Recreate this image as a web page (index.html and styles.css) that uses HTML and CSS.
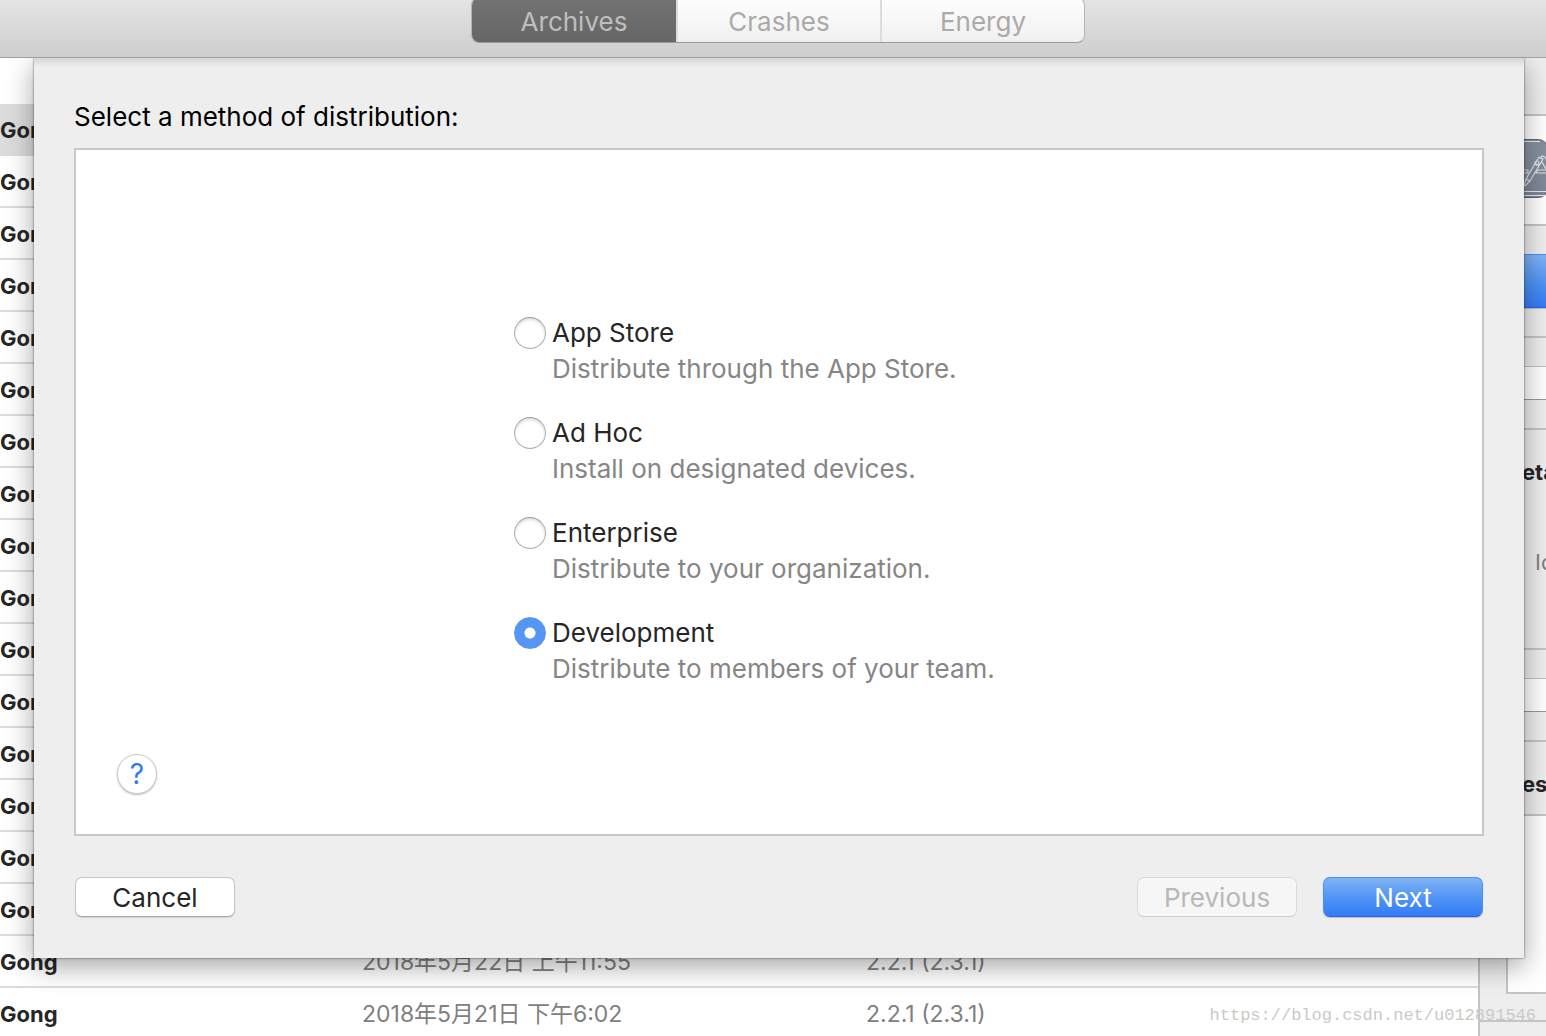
FILE: index.html
```html
<!DOCTYPE html>
<html lang="en">
<head>
<meta charset="utf-8">
<title>Organizer</title>
<link rel="stylesheet" href="styles.css">
</head>
<body>
<div class="window">
  <header class="toolbar">
    <div class="segments">
      <button class="segment segment-on" type="button" disabled>Archives</button>
      <button class="segment" type="button" disabled>Crashes</button>
      <button class="segment" type="button" disabled>Energy</button>
    </div>
  </header>
  <div class="content">
    <main class="list">
      <table class="archives">
        <thead><tr><th class="col-name"></th><th class="col-date"></th><th></th></tr></thead>
        <tbody>
          <tr class="selected"><td>Gong</td><td></td><td></td></tr>
          <tr><td>Gong</td><td></td><td></td></tr>
          <tr><td>Gong</td><td></td><td></td></tr>
          <tr><td>Gong</td><td></td><td></td></tr>
          <tr><td>Gong</td><td></td><td></td></tr>
          <tr><td>Gong</td><td></td><td></td></tr>
          <tr><td>Gong</td><td></td><td></td></tr>
          <tr><td>Gong</td><td></td><td></td></tr>
          <tr><td>Gong</td><td></td><td></td></tr>
          <tr><td>Gong</td><td></td><td></td></tr>
          <tr><td>Gong</td><td></td><td></td></tr>
          <tr><td>Gong</td><td></td><td></td></tr>
          <tr><td>Gong</td><td></td><td></td></tr>
          <tr><td>Gong</td><td></td><td></td></tr>
          <tr><td>Gong</td><td></td><td></td></tr>
          <tr><td>Gong</td><td></td><td></td></tr>
          <tr><td>Gong</td><td>2018年5月22日 上午11:55</td><td>2.2.1 (2.3.1)</td></tr>
          <tr><td>Gong</td><td>2018年5月21日 下午6:02</td><td>2.2.1 (2.3.1)</td></tr>
        </tbody>
      </table>
    </main>
    <aside class="inspector">
      <div class="inspector-head"></div>
      <div class="app">
        <svg class="app-icon" viewBox="0 0 60 60" aria-hidden="true">
          <defs><linearGradient id="g" x1="0" y1="0" x2="0" y2="1"><stop offset="0" stop-color="#87919e"/><stop offset="1" stop-color="#7c8796"/></linearGradient></defs>
          <rect x="0.5" y="0.5" width="59" height="58" rx="9" fill="url(#g)" stroke="#5d6876"/>
          <path d="M2 2.500H52M0 52.500H60M0 56.500H60" stroke="#e8ebee" fill="none"/>
          <g fill="none" stroke="#dfe3e8" stroke-width="1.200">
            <path d="M36 46l2-6 13-22 4 2-13 22-5 5zM47 24l4 3M38 40l4 2"/>
            <circle cx="49" cy="24" r="2"/>
            <path d="M52 20l2-3 3 1 7 14M54 23l6 11M50 31h9l1 3H48zM28 31h12v3H28z"/>
          </g>
        </svg>
      </div>
      <div class="group"><button class="primary upload" type="button" aria-label="Upload"></button></div>
      <div class="group"><input class="field" type="text" aria-label="Name"></div>
      <div class="group details"><h2>Details</h2><p>Identifier</p></div>
      <div class="group"><input class="field" type="text" aria-label="Symbols"></div>
      <div class="group description"><h2><label for="desc">Description</label></h2><textarea id="desc"></textarea></div>
    </aside>
    <form class="sheet">
      <h1>Select a method of distribution:</h1>
      <div class="panel">
        <div class="options">
          <div class="option"><input type="radio" name="m" id="m1"><label for="m1">App Store</label><p>Distribute through the App Store.</p></div>
          <div class="option"><input type="radio" name="m" id="m2"><label for="m2">Ad Hoc</label><p>Install on designated devices.</p></div>
          <div class="option"><input type="radio" name="m" id="m3"><label for="m3">Enterprise</label><p>Distribute to your organization.</p></div>
          <div class="option"><input type="radio" name="m" id="m4" checked><label for="m4">Development</label><p>Distribute to members of your team.</p></div>
        </div>
        <button class="help" type="button">?</button>
      </div>
      <div class="actions">
        <button class="plain" type="button">Cancel</button>
        <button class="plain previous" type="button" disabled>Previous</button>
        <button class="primary" type="button">Next</button>
      </div>
    </form>
  </div>
  <div class="watermark">https://blog.csdn.net/u012891546</div>
</div>
</body>
</html>
```
FILE: styles.css
```css
* { box-sizing: border-box; }

body {
  margin: 0;
  font-family: Inter, "Noto Sans CJK SC", sans-serif;
  font-size: 26px;
  color: #262626;
}

button { font: inherit; padding: 0; }
h1, h2, p { margin: 0; font-weight: 400; }

.window {
  position: relative;
  display: flex;
  flex-direction: column;
  height: 100vh;
  overflow: hidden;
}

.toolbar {
  flex: none;
  display: flex;
  justify-content: center;
  align-items: flex-end;
  height: 58px;
  padding: 0 0 14px 10px;
  background: linear-gradient(#e4e4e4, #cecece);
  border-bottom: 1px solid #a0a0a0;
}

.segments {
  display: flex;
  flex: none;
  height: 46px;
  border: 1px solid #b4b4b4;
  border-bottom-color: #9c9c9c;
  border-radius: 8px;
  overflow: hidden;
  background: linear-gradient(#fefefe, #f0f0f0);
}

.segment {
  width: 204px;
  border: 0;
  border-left: 2px solid #dcdcdc;
  padding-top: 2px;
  background: none;
  color: #aaa;
}

.segment-on {
  border-left: 0;
  background: linear-gradient(#727272, #666);
  color: #bebebe;
}

.content {
  position: relative;
  flex: 1;
  min-height: 0;
  overflow: hidden;
  display: grid;
  grid-template-columns: 1fr 68px;
}

.list { overflow: hidden; background: #fff; }

.archives {
  width: 100%;
  table-layout: fixed;
  border-collapse: separate;
  border-spacing: 0;
  font-size: 23px;
}

.archives th { height: 46px; padding: 0; }
.col-name { width: 362px; }
.col-date { width: 504px; }

.archives td {
  height: 52px;
  padding: 2px 0 0;
  border-bottom: 2px solid #dcdcdc;
  color: #808080;
  line-height: 28px;
  white-space: nowrap;
}

.archives td:first-child { font-size: 22px; font-weight: 700; color: #262626; }
.archives .selected td { background: #dcdcdc; }

.inspector {
  display: flex;
  flex-direction: column;
  border-left: 2px solid #c4c4c4;
  background: #eee;
  overflow: hidden;
  font-size: 22px;
}

.inspector-head { flex: none; height: 58px; border-bottom: 2px solid #c4c4c4; }

.app {
  flex: none;
  height: 110px;
  padding: 23px 0 0 8px;
  background: #fff;
  border-bottom: 2px solid #c4c4c4;
}

.app-icon { display: block; width: 60px; height: 60px; }

.group {
  flex: none;
  width: 320px;
  padding: 28px 0 28px 26px;
  border-bottom: 2px solid #c4c4c4;
}

.primary {
  width: 160px;
  height: 40px;
  border: 1px solid #4a90ee;
  border-bottom-color: #2a62f5;
  border-radius: 7px;
  background: linear-gradient(#7fb3f5, #4a90f5 60%, #347bf7);
  color: #fff;
  box-shadow: 0 1px 1px rgba(0, 0, 0, .2);
}

.upload { display: block; height: 54px; width: 240px; }

.field {
  display: block;
  width: 240px;
  height: 34px;
  border: 1px solid #c0c0c0;
  border-bottom-color: #999;
  background: #fff;
}

.group h2 { font-size: 22px; font-weight: 700; line-height: 28px; }
.details { height: 220px; }
.details p { padding: 62px 0 0 29px; line-height: 28px; color: #808080; }
.description { height: 280px; }

.description textarea {
  display: block;
  width: 260px;
  height: 180px;
  margin-top: 16px;
  border: 2px solid #c4c4c4;
  resize: none;
}

.sheet {
  position: absolute;
  top: 0;
  left: 34px;
  right: 22px;
  padding: 43px 40px 41px;
  background: linear-gradient(#d6d6d6, #eee 9px);
  box-shadow: 0 0 2px rgba(0, 0, 0, .6), 0 8px 26px rgba(0, 0, 0, .36);
}

.sheet h1 { font-size: 26px; line-height: 32px; color: #000; }

.panel {
  margin-top: 15px;
  padding: 165px 41px 40px;
  border: 2px solid #c8c8c8;
  background: #fff;
}

.options {
  display: grid;
  gap: 28px;
  width: 530px;
  margin: 0 auto;
}

.option {
  display: grid;
  grid-template-columns: 32px 1fr;
  column-gap: 6px;
  align-items: center;
  line-height: 36px;
}

.option p { grid-column: 2; color: #868686; }

.option input {
  appearance: none;
  width: 32px;
  height: 32px;
  margin: 0;
  border: 1px solid #b0b0b0;
  border-top-color: #989898;
  border-radius: 50%;
  background: #fff;
  box-shadow: inset 0 2px 3px rgba(0, 0, 0, .14);
}

.option input:checked {
  border-color: #5596f3;
  background: radial-gradient(circle, #fff 5px, #5596f3 6px);
  box-shadow: none;
}

.help {
  display: block;
  width: 40px;
  height: 40px;
  margin-top: 67px;
  border: 1px solid #ccc;
  border-radius: 50%;
  background: #fff;
  color: #2f7bf6;
  font-size: 28px;
  box-shadow: 0 1px 2px rgba(0, 0, 0, .25);
}

.actions { display: flex; gap: 26px; margin-top: 41px; padding: 0 1px; }

.plain {
  width: 160px;
  height: 40px;
  border: 1px solid #c6c6c6;
  border-bottom-color: #aaa;
  border-radius: 7px;
  background: #fff;
  color: #262626;
  box-shadow: 0 1px 1px rgba(0, 0, 0, .12);
}

.previous {
  margin-left: auto;
  border-color: #dadada;
  border-bottom-color: #ccc;
  background: #f6f6f6;
  color: #b8b8b8;
  box-shadow: none;
}

.watermark {
  position: absolute;
  right: 10px;
  bottom: 10px;
  font: 17px/20px "Liberation Mono", monospace;
  color: #cacac5;
}
```
